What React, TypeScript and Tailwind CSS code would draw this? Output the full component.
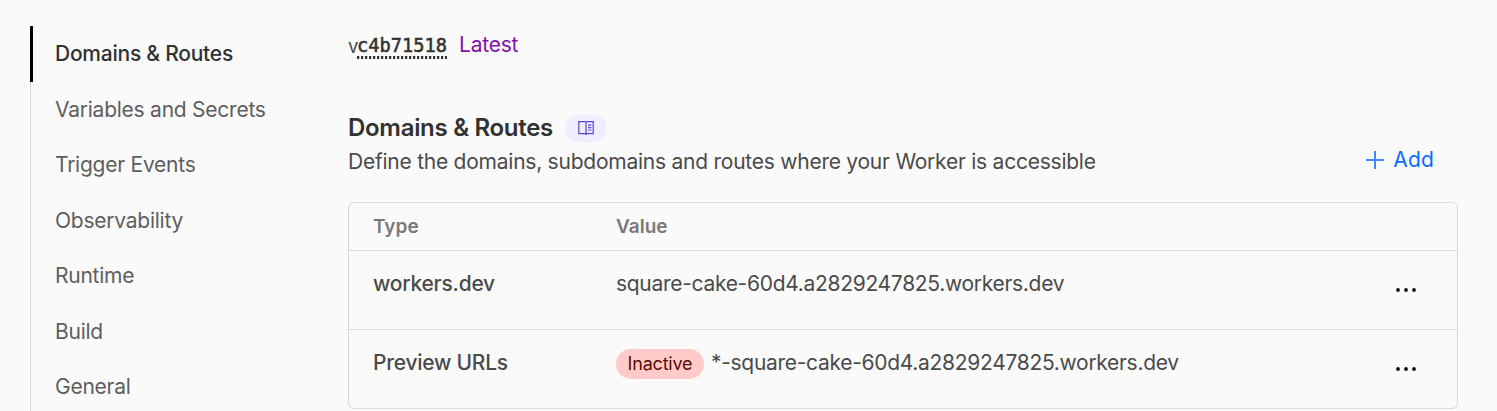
import React from "react";

const links = ["Domains & Routes", "Variables and Secrets", "Trigger Events", "Observability", "Runtime", "Build", "General"];

function Dots() {
  return (
    <svg className="h-3 w-6" viewBox="0 0 24 12" fill="#111111">
      <circle cx="4" cy="6" r="1.9" />
      <circle cx="12" cy="6" r="1.9" />
      <circle cx="20" cy="6" r="1.9" />
    </svg>
  );
}

export default function App() {
  return (
    <div className="flex h-[411px] w-[1497px] overflow-hidden bg-[#fafafa] font-['Inter',sans-serif] text-[21px] tracking-[-0.24px] text-[#4a4a4a]">
      <nav className="ml-[30px] mt-[26px] w-[318px] shrink-0">
        {links.map((l, i) => (
          <a
            key={l}
            className={
              i === 0
                ? "flex h-[55.5px] items-center border-l-3 border-black pl-[22px] font-medium text-[#313131]"
                : "flex h-[55.5px] items-center border-l border-[#d9d9d9] pl-6 text-[#5e5e5e]"
            }
          >
            {l}
          </a>
        ))}
      </nav>
      <main className="w-[1110px] shrink-0">
        <div className="mt-[30px] flex h-[30px] items-center">
          <span className="w-[9px] pt-0.5 text-[18.5px] leading-6">v</span>
          <span className="relative h-7 font-['DejaVu_Sans_Mono',monospace] text-[18.7px] leading-[30px] tracking-normal text-[#313131] [-webkit-text-stroke:0.5px_#313131]">
            c4b71518
            <span className="absolute bottom-0 left-0 h-[3px] w-[90px] bg-[repeating-linear-gradient(90deg,#313131_0_2px,#c8c8c8_2px_3px,transparent_3px_4px)]" />
          </span>
          <span className="ml-[12px] text-[#8511ab]">Latest</span>
        </div>
        <div className="mt-[53px] flex h-[30px] items-center">
          <h2 className="w-[205px] whitespace-nowrap text-[24px] font-semibold tracking-[-0.3px] text-[#313131]">Domains &amp; Routes</h2>
          <span className="ml-3 flex h-[27px] w-[42px] items-center justify-center rounded-full bg-[#f0eefe]">
            <svg className="h-4 w-4" viewBox="0 0 16 16" fill="none" stroke="#5746d6" strokeWidth="1.2">
              <path d="M.8 1.6h6.2l1 .8 1-.8h6.2v12H9l-1 .9-1-.9H.8zM8 2.4v12M10 5.2h3.4M10 7.6h3.4M10 10h3.4" />
            </svg>
          </span>
        </div>
        <div className="flex h-9 items-center justify-between pr-6">
          <p className="pt-0.5">Define the domains, subdomains and routes where your Worker is accessible</p>
          <button className="flex items-center gap-2 pb-0.5 tracking-[0.2px] text-[#056dff]">
            <svg className="h-5 w-5" viewBox="0 0 20 20" stroke="#3b8bff" strokeWidth="2"><path d="M10 1v18M1 10h18" /></svg>
            Add
          </button>
        </div>
        <div className="mt-[23px] rounded-md border border-[#d9d9d9]">
          <div className="flex h-[47px] items-center pl-6 pt-0.5 text-[19px] font-semibold tracking-normal text-[#797979]">
            <span className="w-[243px]">Type</span><span>Value</span>
          </div>
          <div className="flex h-[79px] items-center border-t border-[#d9d9d9] pb-3 pl-6 pr-[39px]">
            <span className="w-[243px] font-medium">workers.dev</span>
            <span className="flex-1 tracking-[-0.3px]">square-cake-60d4.a2829247825.workers.dev</span>
            <span className="pt-3"><Dots /></span>
          </div>
          <div className="flex h-[79px] items-center border-t border-[#d9d9d9] pb-3 pl-6 pr-[39px]">
            <span className="w-[243px] font-medium">Preview URLs</span>
            <span className="flex flex-1 items-center tracking-[-0.3px]">
              <span className="mr-[7px] mt-0.5 flex h-[30px] w-[88px] items-center justify-center rounded-full bg-[#ffcac7] pb-0.5 text-[18px] tracking-[-0.2px] text-[#5a0c06]">Inactive</span>
              *-square-cake-60d4.a2829247825.workers.dev
            </span>
            <span className="pt-3"><Dots /></span>
          </div>
        </div>
      </main>
    </div>
  );
}
